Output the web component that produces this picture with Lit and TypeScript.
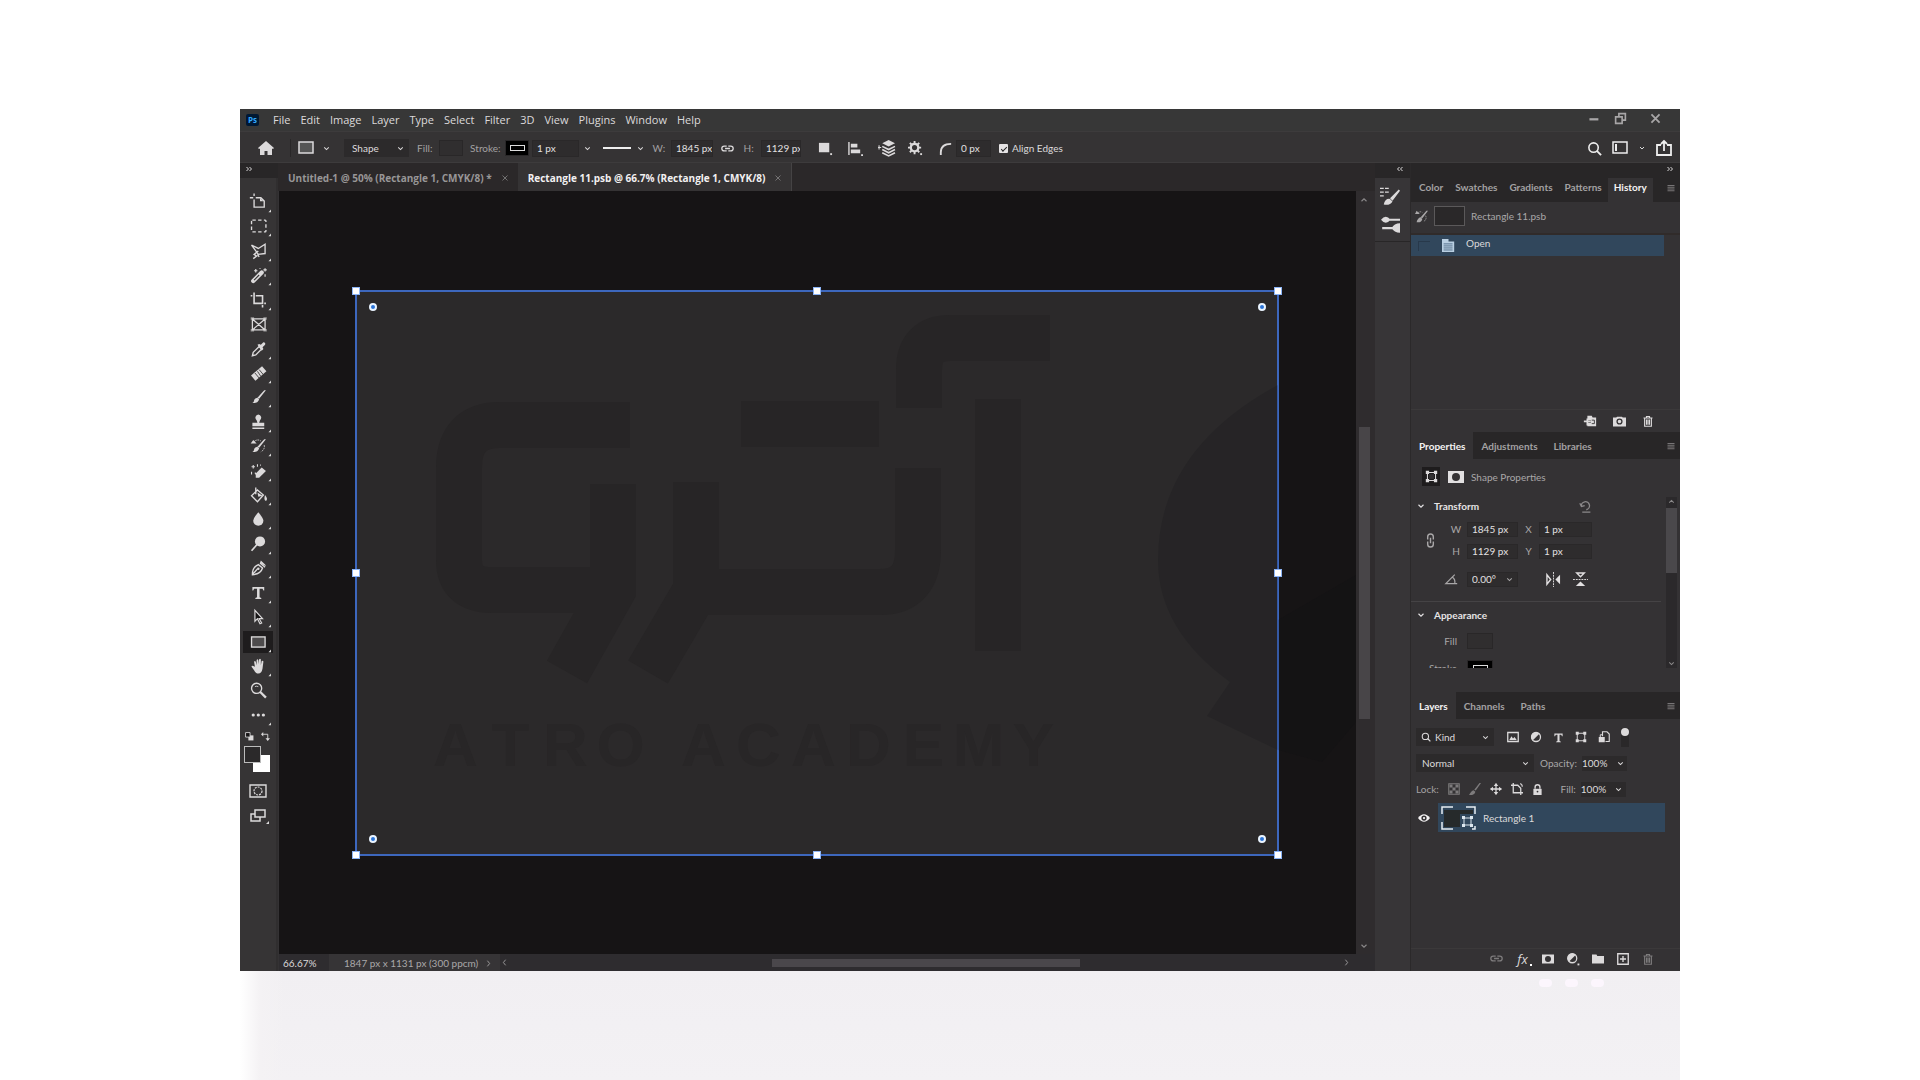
import { LitElement, html, css, svg, TemplateResult } from "lit";
import { customElement, state } from "lit/decorators.js";

const corner = svg`<path d="M22 22h-3l3-3z" fill="#ddd"/>`;

/* Tool strip glyphs, drawn on a 22 x 22 grid. */
const TOOLS: { label: string; art: TemplateResult; menu?: boolean }[] = [
  { label: "Artboard", menu: true, art: svg`<path d="M0 5h4M5 0v3M5 7v9h12V9l-4-4H7" fill="none" stroke="currentColor" stroke-width="1.6"/><path d="M12 5v4h4" fill="currentColor"/>` },
  { label: "Marquee", menu: true, art: svg`<rect x="2" y="3" width="17" height="14" rx="1" fill="none" stroke="currentColor" stroke-width="1.6" stroke-dasharray="4 2.8"/>` },
  { label: "Lasso", menu: true, art: svg`<path d="M2 3l8 4 8-5v11l-8 1zM10 10l-5 4 3 2-4 3M9 14l2 3" fill="none" stroke="currentColor" stroke-width="1.6"/>` },
  { label: "Magic wand", menu: true, art: svg`<path d="M4 17L14 7" stroke="currentColor" stroke-width="5" stroke-linecap="round"/><path d="M5 16l6-6" stroke="#363435" stroke-width="1.3"/><path d="M7 3v4M5 5h4M18 2v4M16 4h4M18 9v3M12 2v1" stroke="currentColor" stroke-width="1.4"/>` },
  { label: "Crop", menu: true, art: svg`<path d="M5 1v13h9M1 5h2M7 5h8v10M17 14h2M15 16v3" fill="none" stroke="currentColor" stroke-width="1.9"/>` },
  { label: "Frame", art: svg`<path d="M3 4h15v13H3zM3 4l15 13M18 4L3 17" fill="none" stroke="currentColor" stroke-width="1.5"/><path d="M1 2h4v3H1zM16 2h4v3h-4zM1 16h4v3H1zM16 16h4v3h-4z" fill="currentColor" opacity=".6"/>` },
  { label: "Eyedropper", menu: true, art: svg`<path d="M3 18l1-4 7-7 3 3-7 7z" fill="none" stroke="currentColor" stroke-width="1.6"/><path d="M9 5l2-1 2 1 3-3q3 0 2 3l-3 3 1 2-2 2z" fill="currentColor"/>` },
  { label: "Healing brush", menu: true, art: svg`<path d="M4 16L17 5" stroke="currentColor" stroke-width="8"/><path d="M6 10l5 6M9 8l4 6M11 6l5 6" stroke="#363435"/>` },
  { label: "Brush", menu: true, art: svg`<path d="M19 2l-8 10-2-1 8-9zM9 11l2 2q-2 5-8 4 2-1 2-3t4-3z" fill="currentColor"/>` },
  { label: "Clone stamp", menu: true, art: svg`<path d="M10 1a4 4 0 0 1 2 7l-1 3h6v4H3v-4h6L8 8a4 4 0 0 1 2-7zM3 16.5h14v1.7H3z" fill="currentColor"/>` },
  { label: "History brush", menu: true, art: svg`<path d="M19 2l-8 10-2-1 8-9zM9 11l2 2q-2 5-8 4 2-1 2-3t4-3zM1 7l3-4 4 4z" fill="currentColor"/><path d="M4 6q4-5 9-2M17 9q1 5-4 8" fill="none" stroke="currentColor" stroke-dasharray="2 1"/>` },
  { label: "Eraser", menu: true, art: svg`<path d="M7 13l7-7 5 4-8 8H7z" fill="currentColor"/><path d="M6 12l4 5" stroke="currentColor" stroke-width="1.5"/><path d="M4 3v4M2 5h4M9 2v3M2 11v3M12 3h1" stroke="currentColor" stroke-width="1.3"/>` },
  { label: "Paint bucket", menu: true, art: svg`<path d="M9 4l7 6-7 8-7-7zM7 1v8" fill="none" stroke="currentColor" stroke-width="1.6"/><path d="M9 7l6 4-5 1zM18 10q4 5 1 7-3-1-1-7z" fill="currentColor"/>` },
  { label: "Blur", menu: true, art: svg`<path d="M10 2q6 7 6 10a6 6 0 0 1-12 0q0-3 6-10z" fill="currentColor"/>` },
  { label: "Dodge", menu: true, art: svg`<circle cx="12" cy="7" r="6" fill="currentColor"/><path d="M9 10l-7 8" stroke="currentColor" stroke-width="2"/>` },
  { label: "Pen", menu: true, art: svg`<path d="M3 18q0-9 7-12l5 4q-2 7-12 8zl6-7M12 4l6 5" fill="none" stroke="currentColor" stroke-width="1.6"/><circle cx="10" cy="11" r="1.5" fill="currentColor"/><path d="M13 1l5 5 1 2-7-4z" fill="currentColor"/>` },
  { label: "Type", menu: true, art: svg`<path d="M3 3h14v4h-1l-1-2h-3.500v10l2 1v1h-7v-1l2-1V5H5L4 7H3z" fill="currentColor"/>` },
  { label: "Path selection", menu: true, art: svg`<path d="M6 2v13l3-3 3 6 2-1-3-5h4z" fill="#161415" stroke="currentColor" stroke-width="1.4"/>` },
  { label: "Rectangle", menu: true, art: svg`<rect x="2" y="4" width="16" height="12" fill="#4d4b4c" stroke="currentColor" stroke-width="1.6"/>` },
  { label: "Hand", menu: true, art: svg`<path d="M6 11L5 5q1-2 2 0l1 4V3q1-2 2 0v5l1-6q1-1 2 0v7l1-5q2-1 2 1l-1 8q-1 6-5 6-3 0-5-4l-3-4q0-2 2-1z" fill="currentColor"/>` },
  { label: "Zoom", art: svg`<circle cx="8" cy="8" r="6" fill="none" stroke="currentColor" stroke-width="1.6"/><path d="M12 12l7 7" stroke="currentColor" stroke-width="2.7"/><path d="M6 6q2-1 4 0" stroke="currentColor" fill="none"/>` },
  { label: "Edit toolbar", menu: true, art: svg`<circle cx="4" cy="10" r="1.900" fill="currentColor"/><circle cx="10" cy="10" r="1.900" fill="currentColor"/><circle cx="16" cy="10" r="1.900" fill="currentColor"/>` },
];

/* General glyphs, drawn on a 16 x 16 grid. */
const GLYPHS: Record<string, TemplateResult> = {
  down: svg`<path d="M4 6l4 4 4-4" fill="none" stroke="currentColor" stroke-width="1.8"/>`,
  up: svg`<path d="M4 10l4-4 4 4" fill="none" stroke="currentColor" stroke-width="1.8"/>`,
  left: svg`<path d="M10 3L6 8l4 5" fill="none" stroke="currentColor" stroke-width="1.5"/>`,
  right: svg`<path d="M6 3l4 5-4 5" fill="none" stroke="currentColor" stroke-width="1.5"/>`,
  expand: svg`<path d="M3 4l4 4-4 4M9 4l4 4-4 4" fill="none" stroke="currentColor" stroke-width="2"/>`,
  collapse: svg`<path d="M7 4L3 8l4 4M13 4L9 8l4 4" fill="none" stroke="currentColor" stroke-width="2"/>`,
  home: svg`<path d="M8 1l8 7-1 1-1-.5V15H9.5v-4h-3v4H2V8.5L1 9 0 8z" fill="currentColor"/>`,
  rect: svg`<rect x="1" y="2" width="14" height="11" fill="#555" stroke="currentColor" stroke-width="1.5"/>`,
  link: svg`<path d="M7 5H4a3 3 0 0 0 0 6h3M9 5h3a3 3 0 0 1 0 6H9M5 8h6" fill="none" stroke="currentColor" stroke-width="1.6"/>`,
  linkv: svg`<path d="M5 7V4a3 3 0 0 1 6 0v3M5 9v3a3 3 0 0 0 6 0V9M8 5v6" fill="none" stroke="currentColor" stroke-width="1.5"/>`,
  solid: svg`<rect x="1" y="2" width="11" height="10" fill="currentColor"/><path d="M13 13h2v2h-2z" fill="currentColor"/>`,
  align: svg`<path d="M1 1v14" stroke="currentColor" stroke-width="1.5"/><path d="M3 3h7v4H3zM3 9h10v4H3zM14 14h2v2h-2z" fill="currentColor"/>`,
  stack: svg`<path d="M10 0l6 3-6 3-6-3z" fill="currentColor"/><path d="M4 6l6 3 6-3M4 9l6 3 6-3M4 12l6 3 6-3" fill="none" stroke="currentColor" stroke-width="1.5"/><path d="M0 7h3M1 5v4" stroke="currentColor"/>`,
  gear: svg`<circle cx="7" cy="7" r="4" fill="none" stroke="currentColor" stroke-width="2.5"/><path d="M7 0v3M7 11v3M0 7h3M11 7h3M2 2l2 2M10 10l2 2M12 2l-2 2M4 10l-2 2" stroke="currentColor" stroke-width="2"/><path d="M13 13h2v2h-2z" fill="currentColor"/>`,
  radius: svg`<path d="M3 15v-3Q3 3 14 3" fill="none" stroke="currentColor" stroke-width="2"/>`,
  search: svg`<circle cx="7" cy="7" r="5" fill="none" stroke="currentColor" stroke-width="1.7"/><path d="M10.5 10.5L15 15" stroke="currentColor" stroke-width="2"/>`,
  workspace: svg`<rect x="1" y="2" width="14" height="11" fill="none" stroke="currentColor" stroke-width="1.5"/><path d="M3 4h2v7H3z" fill="currentColor"/>`,
  share: svg`<path d="M5 5H1v10h14V5h-4M8 11V2M5 4l3-3 3 3" fill="none" stroke="currentColor" stroke-width="1.8"/>`,
  min: svg`<path d="M3 9h11" stroke="currentColor" stroke-width="2.8"/>`,
  restore: svg`<path d="M2 6h8v8H2zM6 6V2h8v8h-4" fill="none" stroke="currentColor" stroke-width="2"/>`,
  close: svg`<path d="M3 3l10 10M13 3L3 13" stroke="currentColor" stroke-width="2.2"/>`,
  x: svg`<path d="M3 3l10 10M13 3L3 13" stroke="#8b898a" stroke-width="1.5"/>`,
  menu: svg`<path d="M1 3h14M1 6.500h14M1 10h14M1 13.500h14" stroke="currentColor" stroke-width="1.6"/>`,
  brushes: svg`<path d="M0 1h3M0 4h3M0 7h3M4 1h3M4 4h3" stroke="currentColor"/><path d="M16 3l-6 8-2-2 7-7zM8 9.500l2 2q-2 3.500-7 2.500 1-5 5-4.500z" fill="currentColor"/>`,
  brushset: svg`<path d="M7 4h9M1 11h9" stroke="currentColor" stroke-width="1.8"/><path d="M0 4q4-5 8 0-4 5-8 0zM9 11q2-4 7-4v8q-5 0-7-4z" fill="currentColor"/>`,
  history: svg`<path d="M16 1L9 10l-2-1 7-8zM7 9l2 2q-1 5-7 4 1-5 5-6zM0 5l2-4 4 4z" fill="currentColor"/><path d="M3 4q3-3 6-1M13 7q2 4-2 7" fill="none" stroke="currentColor" stroke-dasharray="2 1"/>`,
  doc: svg`<path d="M0 0h8v3h7v13H0z" fill="#b9cfe2"/><path d="M2 6h11M2 8.5h11M2 11h11M2 13.5h11" stroke="#42607c" stroke-width="1"/>`,
  newdoc: svg`<path d="M5 2h5l1 2h4v10H5v-4h4V7H5z" fill="currentColor"/><path d="M1 8.5h8M5 5v8" stroke="currentColor" stroke-width="2"/><path d="M10 7h3v4h-3" stroke="#343234" fill="none"/>`,
  camera: svg`<path d="M0 3h4l1-1h6l1 1h4v11H0z" fill="currentColor"/><circle cx="8" cy="8" r="3" fill="none" stroke="#343234" stroke-width="1.6"/>`,
  trash: svg`<path d="M2 4h12M6 4V2h4v2M3.5 4v11h9V4M6 6v7M8 6v7M10 6v7" fill="none" stroke="currentColor" stroke-width="1.5"/>`,
  bounds: svg`<path d="M3 3h10v10H3z" fill="none" stroke="currentColor" stroke-width="1.3"/><path d="M1 1h4v4H1zM11 1h4v4h-4zM1 11h4v4H1zM11 11h4v4h-4z" fill="currentColor"/><path d="M5 5h6v6H5z" fill="#343234"/>`,
  mask: svg`<path d="M0 2h16v12H0z" fill="currentColor"/><circle cx="8" cy="8" r="4" fill="#343234"/>`,
  reset: svg`<path d="M3 8a5 5 0 1 1 6 4M1 4l2 4 4-1M4 15h10" fill="none" stroke="currentColor" stroke-width="1.6"/>`,
  angle: svg`<path d="M15 13H1L12 2M9 5q4 3 3 8" fill="none" stroke="currentColor" stroke-width="1.5"/>`,
  fliph: svg`<path d="M1 3v10l4-5z" fill="none" stroke="currentColor" stroke-width="1.5"/><path d="M15 3v10l-5-5z" fill="currentColor"/><path d="M8 0v16" stroke="currentColor" stroke-dasharray="2 1"/>`,
  flipv: svg`<path d="M4 1h8L8 5z" fill="none" stroke="currentColor" stroke-width="1.5"/><path d="M3 15h10l-5-5z" fill="currentColor"/><path d="M0 8h16" stroke="currentColor" stroke-dasharray="2 1"/>`,
  picture: svg`<path d="M1 2h14v12H1z" fill="none" stroke="currentColor" stroke-width="1.7"/><path d="M3 12l3-5 2 3 2-2 3 4z" fill="currentColor"/>`,
  contrast: svg`<circle cx="8" cy="8" r="6" fill="none" stroke="currentColor" stroke-width="1.7"/><path d="M12.5 3.5l-9 9A6.3 6.3 0 0 1 12.5 3.5z" fill="currentColor"/>`,
  contrastmenu: svg`<circle cx="7" cy="7" r="6" fill="none" stroke="currentColor" stroke-width="1.7"/><path d="M11.5 2.5l-9 9A6.3 6.3 0 0 1 11.5 2.5z" fill="currentColor"/><path d="M14 14h2.500v2.500H14z" fill="currentColor"/>`,
  type: svg`<path d="M2 2h12v4h-1l-1-2H9.5v9l2 1v1h-7v-1l2-1V4H4L3 6H2z" fill="currentColor"/>`,
  smart: svg`<path d="M6 7V1h6l3 3v10h-5" fill="none" stroke="currentColor" stroke-width="1.5"/><path d="M1 8h8v7H1z" fill="currentColor"/><path d="M3 8V5h3" stroke="currentColor" fill="none" stroke-width="1.3"/>`,
  checker: svg`<path d="M1 1h14v14H1z" fill="none" stroke="currentColor" stroke-width="1.4"/><path d="M2 2h4v4H2zM10 2h4v4h-4zM6 6h4v4H6zM2 10h4v4H2zM10 10h4v4h-4z" fill="currentColor"/>`,
  paint: svg`<path d="M16 0L9 10 7 9l7-9zM6 9.500l2.500 2q-1 5-8.500 4.500 3-6 6-6.500z" fill="currentColor"/>`,
  move: svg`<path d="M8 1v14M1 8h14" stroke="currentColor" stroke-width="1.7"/><path d="M8 0l3 4H5zM8 16l3-4H5zM0 8l4-3v6zM16 8l-4-3v6z" fill="currentColor"/>`,
  artboard: svg`<path d="M0 3h9l4 4v9M3 0v13h13" fill="none" stroke="currentColor" stroke-width="1.7"/><path d="M12 1q3 0 3 4" stroke="currentColor" stroke-width="1.5" fill="none"/>`,
  lock: svg`<path d="M2 7h12v9H2z" fill="currentColor"/><path d="M4.5 7V4.5a3.5 3.5 0 0 1 7 0V7" fill="none" stroke="currentColor" stroke-width="2"/><circle cx="8" cy="11" r="1.3" fill="#343234"/>`,
  eye: svg`<path d="M0 8q8-10 16 0-8 10-16 0z" fill="currentColor"/><circle cx="8" cy="8" r="3.5" fill="#343234"/><circle cx="8" cy="8" r="1.5" fill="currentColor"/>`,
  folder: svg`<path d="M0 2h6l1 2h9v10H0z" fill="currentColor"/>`,
  plus: svg`<path d="M1 1h14v14H1zM8 4v8M4 8h8" fill="none" stroke="currentColor" stroke-width="1.8"/>`,
  quick: svg`<path d="M0 2h16v12H0z" fill="none" stroke="currentColor" stroke-width="1.4"/><circle cx="8" cy="8" r="4" fill="none" stroke="currentColor" stroke-width="1.2" stroke-dasharray="2 1"/>`,
  screens: svg`<path d="M5 2h10v7H5zM5 6H1v7h9V9" fill="none" stroke="currentColor" stroke-width="1.5"/><path d="M19 16h-3l3-3z" fill="currentColor"/>`,
  defaults: svg`<path d="M6 6h9v9H6z" fill="currentColor"/><path d="M1 1h8v8H1z" fill="#161415" stroke="currentColor" stroke-width="1.5"/>`,
  swap: svg`<path d="M3 4h9v9" fill="none" stroke="currentColor" stroke-width="1.6"/><path d="M4 0v8L0 4zM8 11h8l-4 5z" fill="currentColor"/>`,
};

const glyph = (name: string, size = 12) =>
  html`<svg class="glyph" width=${size} height=${size} viewBox="0 0 16 16" aria-hidden="true">${GLYPHS[name]}</svg>`;

const iconButton = (name: string, label: string, size = 12, cls = "") =>
  html`<button class="icon ${cls}" type="button" aria-label=${label}>${glyph(name, size)}</button>`;

const MENUS = ["File", "Edit", "Image", "Layer", "Type", "Select", "Filter", "3D", "View", "Plugins", "Window", "Help"];

@customElement("app-root")
export class AppRoot extends LitElement {
  @state() private tool = "Rectangle";

  static styles = css`
    :host {
      display: grid;
      grid-template: 109px 1fr 109px / 1fr 6fr 1fr;
      min-height: 100vh;
      background: #fff;
      color: #dcdadb;
      font: 10px/14px Lato, "Open Sans", sans-serif;
    }
    * { box-sizing: border-box; }
    button, input, select { font: inherit; color: inherit; border: 0; margin: 0; padding: 0; background: none; border-radius: 0; outline: 0; }
    button { display: flex; align-items: center; justify-content: center; flex: none; }
    select { appearance: none; }
    .glyph { display: block; flex: none; overflow: visible; }
    .window { grid-area: 2 / 2; display: flex; flex-direction: column; background: #343234; min-width: 0; }

    .menubar { display: flex; align-items: center; height: 22px; padding: 0 18px 0 6px; background: #373737; font: 11px/16px "Open Sans", sans-serif; }
    .logo { width: 13px; height: 12px; margin-right: 14px; border-radius: 2px; background: #001833; color: #31a8ff; font: bold 8px/12px "Open Sans", sans-serif; text-align: center; }
    .menus { display: flex; gap: 10px; flex: 1; }
    .controls { display: flex; gap: 14px; color: #a8a6a7; align-items: center; padding-bottom: 4px; }
    .controls .wide { margin-left: 8px; }

    .options { display: grid; height: 32px; align-items: center; background: #353334; border-top: 1px solid #3d3b3c; border-bottom: 1px solid #3d3b3c; padding-top: 2px;
      grid-template-columns: 50px 54px 68px 27px 26px 40px 27px 47px 16px 55px 21px 42px 28px 20px 40px 155px 35px 1fr auto; }
    .home { padding-left: 18px; justify-content: flex-start; }
    .preset { height: 18px; padding-left: 7px; gap: 8px; border-left: 1px solid #292728; justify-content: flex-start; }
    .pick { display: flex; align-items: center; position: relative; }
    .pick select { width: 100%; height: 18px; padding-left: 6px; background: #2c2a2b; }
    .pick .glyph { position: absolute; right: 4px; pointer-events: none; }
    .shape-kind { margin-right: 3px; }
    .shape-kind select { padding-left: 8px; }
    .dim { color: #a3a1a2; }
    .chip { width: 24px; height: 16px; background: #302e2f; border: 1px solid #292728; }
    .chip.stroke { background: #000; }
    .chip.stroke i { width: 15px; height: 6px; border: 1px solid #ddd; }
    .field { width: 100%; height: 17px; background: #2e2c2d; border: 1px solid #2a2829; padding-left: 4px; color: #e2e0e1; min-width: 0; }
    .line-style { gap: 5px; justify-content: flex-start; padding-left: 8px; }
    .line-style i { width: 28px; height: 2px; background: #eee; }
    .option-icons { display: flex; padding-left: 17px; }
    .option-icons .icon { width: 30px; justify-content: flex-start; }
    .check { display: flex; align-items: center; gap: 4px; padding-left: 8px; }
    .check input { appearance: none; width: 9px; height: 9px; border-radius: 1px; background: #e6e4e5; display: grid; place-items: center; }
    .check input:checked::after { content: ""; width: 5px; height: 2px; border: solid #222; border-width: 0 0 1px 1px; rotate: -45deg; }
    .app-icons { display: flex; align-items: center; padding-right: 8px; gap: 10px; color: #eee; }

    .body { display: flex; flex: 1; min-height: 0; }
    .tools { width: 38px; display: flex; flex-direction: column; background: #363435; border-right: 2px solid #302e2f; }
    .cap { height: 15px; background: #282627; display: flex; align-items: center; padding: 0 6px; flex: none; }
    .tools .cap { margin-right: -2px; padding: 0 0 3px 5px; }
    .toollist { display: flex; flex-direction: column; justify-content: space-between; height: 535px; margin-top: 13px; }
    .tool { width: 30px; height: 22px; margin-left: 3px; padding-left: 3px; color: #dcdadb; }
    .tool svg { overflow: visible; }
    .tool.active { background: #1e1c1d; }
    .mini { display: flex; gap: 7px; padding: 6px 0 0 5px; }
    .colors { position: relative; height: 28px; margin: 5px 0 0 4px; }
    .fore, .back { position: absolute; width: 17px; height: 17px; }
    .back { left: 9px; top: 9px; background: #fff; }
    .fore { left: 0; top: 0; background: #2b292a; border: 1px solid #bbb; }
    .modes { display: flex; flex-direction: column; gap: 9px; align-items: flex-start; padding: 9px 0 0 10px; }

    .doc { flex: 1; min-width: 0; display: flex; flex-direction: column; }
    .tabs { display: flex; height: 28px; background: #2b2829; font: bold 10px/16px "Open Sans", sans-serif; }
    .tab { display: flex; align-items: center; gap: 9px; padding: 2px 9px 0 10px; color: #989697; white-space: nowrap; }
    .tab.active { background: #353334; color: #f2f0f1; border-right: 1px solid #454344; }
    .view { display: flex; flex: 1; min-height: 0; }
    .canvas { position: relative; flex: 1; background: #161415; overflow: hidden; margin-left: 1px; }
    .shape { position: absolute; left: 76px; top: 99px; width: 924px; height: 566px; background: #2b292a; border: 2px solid #3d67bd; }
    .handle { position: absolute; width: 8px; height: 8px; background: #fff; border: 1px solid #8cb4f5; translate: -50% -50%; }
    .dot { position: absolute; width: 8px; height: 8px; border-radius: 50%; background: #2a74d8; border: 2px solid #eaf4ff; translate: -50% -50%; }
    .mark { position: absolute; inset: 0; width: 1077px; height: 762px; }
    .caption { position: absolute; left: 149px; top: 521px; display: flex; gap: 28px; color: #282627; font: 62px/66px "Liberation Sans", sans-serif; }
    .caption span { display: flex; }
    .caption b { width: 55px; text-align: center; }
    .vscroll { width: 19px; display: flex; flex-direction: column; align-items: center; padding: 4px 3px 3px 0; background: #2f2c2e; color: #8b898a; }
    .vtrack { flex: 1; width: 11px; display: flex; flex-direction: column; }
    .vthumb { margin-top: 222px; height: 292px; background: #484548; }
    .status { display: flex; align-items: center; height: 17px; background: #2e2c2f; color: #a9a7a8; margin-left: 1px; }
    .status .zoom { width: 50px; height: 14px; padding-left: 4px; color: #dcdadb; }
    .status .size { flex: none; width: 171px; height: 17px; padding: 1px 7px 0 15px; display: flex; align-items: center; justify-content: space-between; background: #363436; color: #aaa8a9; }
    .hthumb { height: 8px; width: 308px; background: #4a474b; }
    .htrack { flex: 1; padding-left: 263px; }
    .status .end { padding-right: 24px; }

    .dock { width: 36px; display: flex; flex-direction: column; background: #373537; border-right: 1px solid #2b292a; }
    .dock .cap, .panels > .cap { justify-content: flex-end; padding: 0 6px 3px; }
    .dockgroup { display: flex; flex-direction: column; align-items: center; gap: 8px; padding: 9px 5px 7px 0; border-bottom: 1px solid #282627; }

    .panels { width: 269px; display: flex; flex-direction: column; background: #343234; }
    .ptabs { display: flex; align-items: stretch; height: 27px; background: #282627; flex: none; font-weight: bold; color: #a3a1a2; padding-right: 5px; }
    .ptabs button { padding: 0 8px; }
    .ptabs button.active { background: #343234; color: #f4f2f3; }
    .ptabs button:last-child { margin-left: auto; padding: 0; color: #8b898a; }
    .ptabs.first { height: 24px; }
    .ptabs.first button { padding: 0 6px 6px; }
    .ptabs.first button:first-child { padding-left: 8px; }
    .ptabs.first button:last-child { padding: 0 0 4px; }
    .history { min-height: 207px; }
    .snap { display: flex; align-items: center; height: 33px; padding: 0 0 3px 4px; gap: 6px; color: #a9a7a8; border-bottom: 2px solid #302b2a; }
    .thumb { width: 31px; height: 20px; background: #2a2829; border: 1px solid #5b595a; }
    .state { display: flex; align-items: center; width: 253px; height: 21px; padding-left: 7px; gap: 11px; background: #31475c; }
    .state i { width: 12px; height: 10px; margin-right: 1px; border: solid #28394b; border-width: 1px 0 0 1px; }
    .state span { padding-bottom: 5px; }
    .foot { display: flex; align-items: center; justify-content: flex-end; height: 23px; flex: none; border-top: 1px solid #3b393a; padding-right: 26px; gap: 16px; }
    .foot.layersfoot { gap: 13px; padding-bottom: 3px; }
    .fx { position: relative; width: 13px; font: italic 13px/14px "Open Sans", sans-serif; }
    .fx::after { content: ""; position: absolute; right: -3px; bottom: 0; width: 2px; height: 2px; background: #fff; }
    .off { color: #7d7b7c; }

    .props { height: 233px; }
    .kind { display: flex; align-items: center; height: 35px; padding-left: 11px; gap: 7px; color: #a9a7a8; }
    .kind .bounds { width: 18px; height: 19px; background: #1e1c1d; color: #dcdadb; }
    .kind .mask { color: #e2e0e1; width: 17px; }
    .scroller { display: flex; height: 174px; overflow: hidden; }
    .fields { width: 250px; margin-right: 5px; }
    .head { display: flex; align-items: center; height: 24px; gap: 8px; padding-left: 5px; font-weight: bold; color: #e6e4e5; }
    .head .icon { margin-left: auto; margin-right: 69px; color: #8b898a; }
    .xy { display: grid; grid-template: 22px 22px 34px / 34px 22px 51px 21px 53px; align-items: center; text-align: center; color: #a9a7a8; }
    .xy .field { height: 15px; }
    .chain { grid-row: 1 / 3; padding-left: 4px; }
    .turn { grid-column: 2; padding-right: 6px; }
    .flips { grid-column: 4 / 6; display: flex; gap: 12px; padding-left: 28px; color: #e2e0e1; }
    .appearance { border-top: 1px solid #454345; margin-top: 5px; padding-top: 1px; }
    .paintrow { display: flex; align-items: center; height: 27px; color: #a9a7a8; }
    .paintrow span { width: 56px; padding-right: 10px; text-align: right; }
    .paintrow .chip { width: 26px; }
    .pscroll { width: 11px; margin-top: 3px; display: flex; flex-direction: column; align-items: center; background: #2b292b; color: #8b898a; }
    .pscroll i { width: 11px; height: 65px; margin: 2px 0 auto; background: #4a484b; }

    .layers { flex: 1; padding: 5px 0 0 5px; }
    .row { display: flex; align-items: center; height: 26px; }
    .kindpick { width: 78px; }
    .kindpick select { padding-left: 19px; }
    .pick .lead { right: auto; left: 5px; }
    .filters { display: flex; gap: 11px; padding-left: 13px; align-items: center; }
    .toggle { width: 8px; height: 19px; background: #2a2829; align-items: flex-start; }
    .toggle i { width: 8px; height: 8px; border-radius: 50%; background: #dcdadb; }
    .blend { width: 118px; }
    .label { width: 48px; text-align: right; padding-right: 5px; color: #a9a7a8; }
    .label.short { width: 33px; }
    .percent { width: 31px; height: 15px; background: #2c2a2b; }
    .percent + .icon { width: 14px; height: 15px; background: #2c2a2b; }
    .locks { display: flex; gap: 9px; width: 100px; margin-left: 9px; }
    .layer { display: flex; align-items: center; margin-left: -5px; margin-top: 1px; }
    .layer .visible { width: 27px; padding-right: 2px; height: 29px; color: #f4f2f3; }
    .layername { flex: 1; height: 29px; margin-right: 15px; padding-left: 3px; gap: 7px; justify-content: flex-start; background: #31475c; }
    .reflection { grid-area: 3 / 2; display: flex; justify-content: flex-end; gap: 13px; padding: 8px 76px 0 0;
      background: linear-gradient(90deg, #fff 0, #f4f2f4 20px, transparent 44px), linear-gradient(#f1eff2, #f3f1f4); }
    .reflection i { width: 13px; height: 8px; border-radius: 4px; background: #fcf6fd; }
  `;

  private menuBar() {
    return html`<header class="menubar">
      <span class="logo">Ps</span>
      <nav class="menus">${MENUS.map((m) => html`<button type="button">${m}</button>`)}</nav>
      <div class="controls">${iconButton("min", "Minimize", 13)}${iconButton("restore", "Restore", 13)}${iconButton("close", "Close", 13, "wide")}</div>
    </header>`;
  }

  private optionsBar() {
    return html`<div class="options">
      <button class="home" type="button" aria-label="Home">${glyph("home", 16)}</button>
      <button class="preset" type="button" aria-label="Tool preset">${glyph("rect", 16)}${glyph("down", 9)}</button>
      <div class="pick shape-kind"><select aria-label="Tool mode"><option>Shape</option></select>${glyph("down", 9)}</div>
      <span class="dim">&nbsp;&nbsp;Fill:</span>
      <button class="chip" type="button" aria-label="Fill colour"></button>
      <span class="dim">&nbsp;&nbsp;Stroke:</span>
      <button class="chip stroke" type="button" aria-label="Stroke colour"><i></i></button>
      <input class="field" aria-label="Stroke width" .value=${"1 px"} />
      ${iconButton("down", "Stroke widths", 9)}
      <button class="line-style" type="button" aria-label="Stroke style"><i></i>${glyph("down", 9)}</button>
      <label class="dim" for="ow">&nbsp;W:</label><input id="ow" class="field" .value=${"1845 px"} />
      ${iconButton("link", "Link sizes", 13)}
      <label class="dim" for="oh">&nbsp;H:</label><input id="oh" class="field" .value=${"1129 px"} />
      <div class="option-icons">
        ${iconButton("solid", "Path operations", 15)}${iconButton("align", "Path alignment", 15)}${iconButton("stack", "Path arrangement", 17)}
        ${iconButton("gear", "Path options", 15)}${iconButton("radius", "Corner radius", 15)}
      </div>
      <input class="field" aria-label="Radius" .value=${"0 px"} />
      <label class="check"><input type="checkbox" checked />Align Edges</label>
      <div class="app-icons">${iconButton("search", "Search", 15)}${iconButton("workspace", "Workspace", 16)}${iconButton("down", "Workspaces", 8)}${iconButton("share", "Share", 16)}</div>
    </div>`;
  }

  private toolStrip() {
    return html`<aside class="tools">
      <div class="cap">${iconButton("expand", "Expand tools", 8)}</div>
      <div class="toollist">
        ${TOOLS.map(
          (t) => html`<button class="tool ${t.label === this.tool ? "active" : ""}" type="button" aria-label=${t.label} @click=${() => (this.tool = t.label)}>
            <svg width="22" height="22" viewBox="0 0 26 26"><g transform="translate(1 3)">${t.art}</g>${t.menu ? svg`<g transform="translate(4 3)">${corner}</g>` : ""}</svg>
          </button>`
        )}
      </div>
      <div class="mini">${iconButton("defaults", "Default colours", 9)}${iconButton("swap", "Swap colours", 9)}</div>
      <div class="colors"><button class="back" type="button" aria-label="Background colour"></button><button class="fore" type="button" aria-label="Foreground colour"></button></div>
      <div class="modes">${iconButton("quick", "Quick mask", 16)}${iconButton("screens", "Screen mode", 16)}</div>
    </aside>`;
  }

  private canvasArea() {
    const left = 77, right = 999, top = 100, bottom = 664;
    const midX = 538, midY = 382;
    const handles = [[left, top], [midX, top], [right, top], [left, midY], [right, midY], [left, bottom], [midX, bottom], [right, bottom]];
    const dots = [[94, 116], [983, 116], [94, 648], [983, 648]];
    return html`<div class="canvas">
      <div class="shape"></div>
      <svg class="mark" viewBox="279 191 1077 762" aria-hidden="true">
        <g fill="none" stroke="#272526" stroke-width="46">
          <path d="M630 425H500Q459 425 459 468V560Q459 590 492 590H613M613 484V590L567 672"/>
          <path d="M696 482V590L648 672M696 592H880Q918 592 918 550V468M741 424H879M998 399V651M919 408V370Q919 338 950 338H1050"/>
        </g>
        <path d="M1278 385Q1158 450 1158 560Q1158 630 1230 682L1207 716L1278 750L1322 762L1356 722V575L1278 620Z" fill="#100c14" opacity=".15"/>
      </svg>
      <div class="caption">${["ATRO", "ACADEMY"].map((w) => html`<span>${[...w].map((c) => html`<b>${c}</b>`)}</span>`)}</div>
      ${handles.map(([x, y]) => html`<i class="handle" style="left:${x}px;top:${y}px"></i>`)}
      ${dots.map(([x, y]) => html`<i class="dot" style="left:${x}px;top:${y}px"></i>`)}
    </div>`;
  }

  private documentArea() {
    return html`<main class="doc">
      <div class="tabs">
        <div class="tab">Untitled-1 @ 50% (Rectangle 1, CMYK/8) * ${iconButton("x", "Close Untitled-1", 8)}</div>
        <div class="tab active">Rectangle 11.psb @ 66.7% (Rectangle 1, CMYK/8) ${iconButton("x", "Close Rectangle 11", 8)}</div>
      </div>
      <div class="view">
        ${this.canvasArea()}
        <div class="vscroll">${iconButton("up", "Scroll up", 10)}<div class="vtrack"><div class="vthumb"></div></div>${iconButton("down", "Scroll down", 10)}</div>
      </div>
      <div class="status">
        <input class="zoom" aria-label="Zoom" .value=${"66.67%"} />
        <div class="size"><span>1847 px x 1131 px (300 ppcm)</span>${glyph("right", 9)}</div>
        ${iconButton("left", "Scroll left", 9)}
        <div class="htrack"><div class="hthumb"></div></div>
        ${iconButton("right", "Scroll right", 9, "end")}
      </div>
    </main>`;
  }

  private panelTabs(names: string[], active: string, cls = "") {
    return html`<div class="ptabs ${cls}">
      ${names.map((n) => html`<button type="button" class=${n === active ? "active" : ""}>${n}</button>`)}
      <button type="button" aria-label="Panel menu">${glyph("menu", 8)}</button>
    </div>`;
  }

  private historyPanel() {
    return html`${this.panelTabs(["Color", "Swatches", "Gradients", "Patterns", "History"], "History", "first")}
      <section class="history">
        <div class="snap">${glyph("history", 13)}<span class="thumb"></span><span>Rectangle 11.psb</span></div>
        <div class="state"><i></i>${glyph("doc", 13)}<span>Open</span></div>
      </section>
      <div class="foot">${iconButton("newdoc", "New document from state", 14)}${iconButton("camera", "New snapshot", 13)}${iconButton("trash", "Delete state", 12)}</div>`;
  }

  private propertiesPanel() {
    return html`${this.panelTabs(["Properties", "Adjustments", "Libraries"], "Properties")}
      <section class="props">
        <div class="kind"><button class="bounds" type="button" aria-label="Shape">${glyph("bounds", 13)}</button><button class="mask" type="button" aria-label="Mask">${glyph("mask", 16)}</button><span>Shape Properties</span></div>
        <div class="scroller">
          <div class="fields">
            <div class="head">${glyph("down", 10)}<span>Transform</span>${iconButton("reset", "Reset", 13)}</div>
            <div class="xy">
              <button class="chain" type="button" aria-label="Link width and height">${glyph("linkv", 15)}</button>
              <label for="pw">W</label><input id="pw" class="field" .value=${"1845 px"} />
              <label for="px">X</label><input id="px" class="field" .value=${"1 px"} />
              <label for="ph">H</label><input id="ph" class="field" .value=${"1129 px"} />
              <label for="py">Y</label><input id="py" class="field" .value=${"1 px"} />
              <span class="turn">${glyph("angle", 13)}</span>
              <div class="pick"><input class="field" aria-label="Angle" .value=${"0.00°"} />${glyph("down", 9)}</div>
              <div class="flips">${iconButton("fliph", "Flip horizontal", 15)}${iconButton("flipv", "Flip vertical", 15)}</div>
            </div>
            <div class="appearance">
              <div class="head">${glyph("down", 10)}<span>Appearance</span></div>
              <div class="paintrow"><span>Fill</span><button class="chip" type="button" aria-label="Fill"></button></div>
              <div class="paintrow"><span>Stroke</span><button class="chip stroke" type="button" aria-label="Stroke"><i></i></button></div>
            </div>
          </div>
          <div class="pscroll">${glyph("up", 9)}<i></i>${glyph("down", 9)}</div>
        </div>
      </section>`;
  }

  private layersPanel() {
    return html`${this.panelTabs(["Layers", "Channels", "Paths"], "Layers")}
      <section class="layers">
        <div class="row">
          <div class="pick kindpick"><select aria-label="Filter by"><option>Kind</option></select><svg class="glyph lead" width="10" height="10" viewBox="0 0 16 16">${GLYPHS.search}</svg>${glyph("down", 9)}</div>
          <div class="filters">
            ${iconButton("picture", "Pixel layers")}${iconButton("contrast", "Adjustment layers")}${iconButton("type", "Type layers", 11)}${iconButton("bounds", "Shape layers")}${iconButton("smart", "Smart objects")}
            <button class="toggle" type="button" aria-label="Filtering"><i></i></button>
          </div>
        </div>
        <div class="row">
          <div class="pick blend"><select aria-label="Blend mode"><option>Normal</option></select>${glyph("down", 9)}</div>
          <label class="label" for="op">Opacity:</label><input id="op" class="percent" .value=${"100%"} />${iconButton("down", "Opacity slider", 9)}
        </div>
        <div class="row">
          <span class="dim">Lock:</span>
          <div class="locks">${iconButton("checker", "Lock transparency", 12, "off")}${iconButton("paint", "Lock pixels", 12, "off")}${iconButton("move", "Lock position")}${iconButton("artboard", "Lock artboard")}${iconButton("lock", "Lock all", 11)}</div>
          <label class="label short" for="fl">Fill:</label><input id="fl" class="percent" .value=${"100%"} />${iconButton("down", "Fill slider", 9)}
        </div>
        <div class="layer">
          <button class="visible" type="button" aria-label="Visibility">${glyph("eye", 12)}</button>
          <button class="layername" type="button">
            <svg width="35" height="24" viewBox="0 0 35 24" aria-hidden="true">
              <path d="M3 4h29v17H3z" fill="#262a2b"/>
              <path d="M1 8V1h11M25 1h9v7M34 20v3h-3M12 23H1v-7" fill="none" stroke="#e6eef4" stroke-width="1.5"/>
              <path d="M19 8h14v14H19z" fill="#31475c"/><path d="M23 12h7v7h-7z" fill="none" stroke="#dce6ee"/>
              <path d="M21 10h3v3h-3zM29 10h3v3h-3zM21 18h3v3h-3zM29 18h3v3h-3z" fill="#dce6ee"/>
            </svg>Rectangle 1
          </button>
        </div>
      </section>
      <div class="foot layersfoot">
        ${iconButton("link", "Link layers", 13, "off")}<button class="fx" type="button" aria-label="Layer style">fx</button>${iconButton("mask", "Add mask", 12)}${iconButton("contrastmenu", "New adjustment", 12)}
        ${iconButton("folder", "New group")}${iconButton("plus", "New layer", 12)}${iconButton("trash", "Delete layer", 12, "off")}
      </div>`;
  }

  render() {
    return html`
      <div class="window">
        ${this.menuBar()}${this.optionsBar()}
        <div class="body">
          ${this.toolStrip()}${this.documentArea()}
          <aside class="dock">
            <div class="cap">${iconButton("collapse", "Collapse dock", 8)}</div>
            <div class="dockgroup">${iconButton("brushes", "Brush settings", 20)}${iconButton("brushset", "Brushes", 19)}</div>
          </aside>
          <aside class="panels">
            <div class="cap">${iconButton("expand", "Collapse panels", 8)}</div>
            ${this.historyPanel()}${this.propertiesPanel()}${this.layersPanel()}
          </aside>
        </div>
      </div>
      <div class="reflection"><i></i><i></i><i></i></div>
    `;
  }
}
